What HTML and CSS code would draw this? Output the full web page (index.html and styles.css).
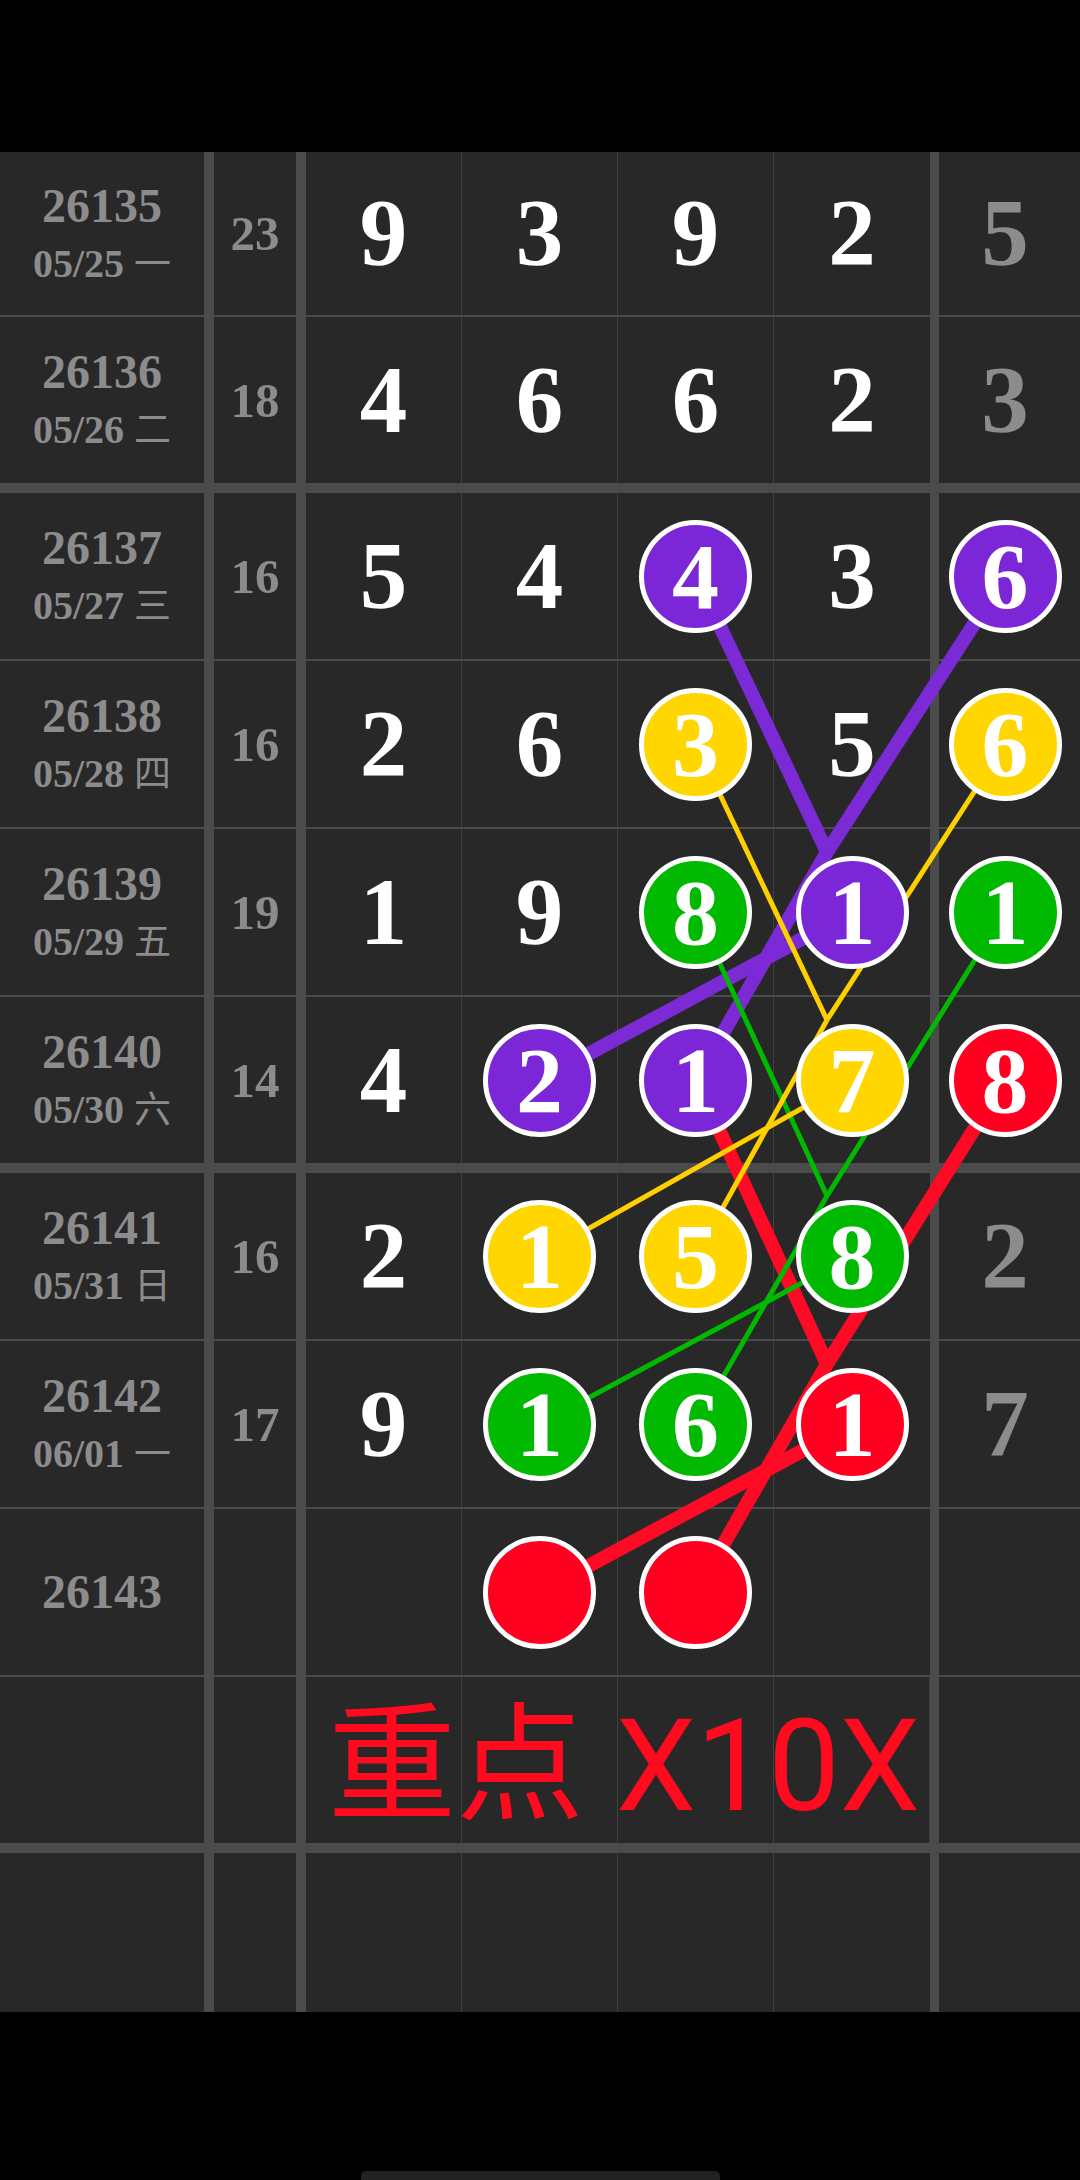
FILE: index.html
```html
<!DOCTYPE html>
<html lang="zh">
<head>
    <meta charset="UTF-8">
    <title>走势图</title>
    <link rel="stylesheet" href="styles.css">
</head>
<body>
    <div class="status-bar"></div>

    <div class="board">
        <!-- connecting lines, drawn under the balls -->
        <svg class="links" width="1080" height="1860" viewBox="0 0 1080 1860">
            <g stroke="#ff0a24" stroke-width="14">
                <line x1="696" y1="928" x2="827" y2="1212"/>
                <line x1="1005" y1="928" x2="827" y2="1212"/>
                <line x1="540" y1="1440" x2="852" y2="1272"/>
                <line x1="696" y1="1440" x2="827" y2="1212"/>
            </g>
            <g stroke="#7b2ad6" stroke-width="14">
                <line x1="696" y1="424" x2="827" y2="700"/>
                <line x1="1005" y1="424" x2="827" y2="700"/>
                <line x1="540" y1="928" x2="852" y2="760"/>
                <line x1="696" y1="928" x2="827" y2="700"/>
            </g>
            <g stroke="#00b900" stroke-width="5">
                <line x1="696" y1="760" x2="827" y2="1044"/>
                <line x1="1005" y1="760" x2="827" y2="1044"/>
                <line x1="540" y1="1272" x2="852" y2="1104"/>
                <line x1="696" y1="1272" x2="827" y2="1044"/>
            </g>
            <g stroke="#ffd000" stroke-width="5">
                <line x1="696" y1="592" x2="827" y2="868"/>
                <line x1="1005" y1="592" x2="827" y2="868"/>
                <line x1="540" y1="1104" x2="852" y2="928"/>
                <line x1="696" y1="1104" x2="827" y2="868"/>
            </g>
        </svg>

        <div class="row first">
            <div class="cell period"><div class="issue">26135</div><div class="date">05/25 <span class="wd">一</span></div></div>
            <div class="cell sum">23</div>
            <div class="cell num">9</div>
            <div class="cell num">3</div>
            <div class="cell num">9</div>
            <div class="cell num end">2</div>
            <div class="cell tail">5</div>
        </div>

        <div class="row group-end">
            <div class="cell period"><div class="issue">26136</div><div class="date">05/26 <span class="wd">二</span></div></div>
            <div class="cell sum">18</div>
            <div class="cell num">4</div>
            <div class="cell num">6</div>
            <div class="cell num">6</div>
            <div class="cell num end">2</div>
            <div class="cell tail">3</div>
        </div>

        <div class="row">
            <div class="cell period"><div class="issue">26137</div><div class="date">05/27 <span class="wd">三</span></div></div>
            <div class="cell sum">16</div>
            <div class="cell num">5</div>
            <div class="cell num">4</div>
            <div class="cell num"><span class="ball purple">4</span></div>
            <div class="cell num end">3</div>
            <div class="cell tail"><span class="ball purple">6</span></div>
        </div>

        <div class="row">
            <div class="cell period"><div class="issue">26138</div><div class="date">05/28 <span class="wd">四</span></div></div>
            <div class="cell sum">16</div>
            <div class="cell num">2</div>
            <div class="cell num">6</div>
            <div class="cell num"><span class="ball yellow">3</span></div>
            <div class="cell num end">5</div>
            <div class="cell tail"><span class="ball yellow">6</span></div>
        </div>

        <div class="row">
            <div class="cell period"><div class="issue">26139</div><div class="date">05/29 <span class="wd">五</span></div></div>
            <div class="cell sum">19</div>
            <div class="cell num">1</div>
            <div class="cell num">9</div>
            <div class="cell num"><span class="ball green">8</span></div>
            <div class="cell num end"><span class="ball purple">1</span></div>
            <div class="cell tail"><span class="ball green">1</span></div>
        </div>

        <div class="row group-end">
            <div class="cell period"><div class="issue">26140</div><div class="date">05/30 <span class="wd">六</span></div></div>
            <div class="cell sum">14</div>
            <div class="cell num">4</div>
            <div class="cell num"><span class="ball purple">2</span></div>
            <div class="cell num"><span class="ball purple">1</span></div>
            <div class="cell num end"><span class="ball yellow">7</span></div>
            <div class="cell tail"><span class="ball red">8</span></div>
        </div>

        <div class="row">
            <div class="cell period"><div class="issue">26141</div><div class="date">05/31 <span class="wd">日</span></div></div>
            <div class="cell sum">16</div>
            <div class="cell num">2</div>
            <div class="cell num"><span class="ball yellow">1</span></div>
            <div class="cell num"><span class="ball yellow">5</span></div>
            <div class="cell num end"><span class="ball green">8</span></div>
            <div class="cell tail">2</div>
        </div>

        <div class="row">
            <div class="cell period"><div class="issue">26142</div><div class="date">06/01 <span class="wd">一</span></div></div>
            <div class="cell sum">17</div>
            <div class="cell num">9</div>
            <div class="cell num"><span class="ball green">1</span></div>
            <div class="cell num"><span class="ball green">6</span></div>
            <div class="cell num end"><span class="ball red">1</span></div>
            <div class="cell tail">7</div>
        </div>

        <div class="row">
            <div class="cell period"><div class="issue">26143</div></div>
            <div class="cell sum"></div>
            <div class="cell num"></div>
            <div class="cell num"><span class="ball red"></span></div>
            <div class="cell num"><span class="ball red"></span></div>
            <div class="cell num end"></div>
            <div class="cell tail"></div>
        </div>

        <div class="row group-end">
            <div class="cell period"></div>
            <div class="cell sum"></div>
            <div class="cell note">重点 X10X</div>
            <div class="cell tail"></div>
        </div>

        <div class="row last">
            <div class="cell period"></div>
            <div class="cell sum"></div>
            <div class="cell num"></div>
            <div class="cell num"></div>
            <div class="cell num"></div>
            <div class="cell num end"></div>
            <div class="cell tail"></div>
        </div>
    </div>

    <div class="nav-area">
        <div class="home-bar"></div>
    </div>
</body>
</html>
```

FILE: styles.css
```css
* {
    box-sizing: border-box;
}
body {
    margin: 0;
    background-color: #000;
    font-family: "Liberation Serif", "Noto Sans CJK SC", serif;
    font-weight: bold;
}
.status-bar {
    height: 152px;
}
.board {
    position: relative;
    background-color: #282828;
}
.links {
    position: absolute;
    top: 0;
    left: 0;
    z-index: 1;
    pointer-events: none;
}
.row {
    display: grid;
    grid-template-columns: 214px 92px 156px 156px 156px 165px 141px;
    height: 168px;
    border-bottom: 2px solid #4b4b4b;
}
.row.first {
    height: 165px;
}
.row.group-end {
    height: 176px;
    border-bottom-width: 10px;
}
.row.last {
    height: 159px;
    border-bottom: none;
}
.cell {
    display: flex;
    flex-direction: column;
    align-items: center;
    justify-content: center;
    border-right: 1px solid #404040;
    line-height: 1;
}
.period,
.sum {
    border-right: 10px solid #4b4b4b;
    color: #8c8c8c;
}
.issue {
    font-size: 48px;
    line-height: 52px;
}
.date {
    font-size: 40px;
    line-height: 48px;
    margin-top: 5px;
}
.date .wd {
    font-family: "Noto Sans CJK SC", sans-serif;
    font-weight: normal;
    font-size: 37px;
}
.sum {
    font-size: 49px;
}
.num {
    font-size: 95px;
    color: #fff;
}
.num.end {
    border-right: 9px solid #4b4b4b;
}
.tail {
    border-right: none;
    padding-right: 9px;
    font-size: 95px;
    color: #8c8c8c;
}
.ball {
    position: relative;
    z-index: 2;
    display: flex;
    align-items: center;
    justify-content: center;
    width: 113px;
    height: 113px;
    border: 5px solid #fff;
    border-radius: 50%;
    color: #fff;
    font-size: 94px;
    line-height: 1;
}
.ball.purple {
    background-color: #7b27d8;
}
.ball.yellow {
    background-color: #ffd600;
}
.ball.green {
    background-color: #00b900;
}
.ball.red {
    background-color: #ff0020;
}
.note {
    grid-column: span 4;
    flex-direction: row;
    padding-left: 12px;
    padding-top: 12px;
    border-right: 9px solid #4b4b4b;
    background: repeating-linear-gradient(to right, transparent 0 155px, #404040 155px 156px);
    font-family: Roboto, "Noto Sans CJK SC", sans-serif;
    font-weight: normal;
    font-size: 128px;
    color: #ff0a1e;
    white-space: nowrap;
}
.nav-area {
    height: 168px;
    display: flex;
    justify-content: center;
    align-items: flex-end;
}
.home-bar {
    width: 359px;
    height: 9px;
    background-color: #222;
    border-radius: 5px 5px 0 0;
}
```
